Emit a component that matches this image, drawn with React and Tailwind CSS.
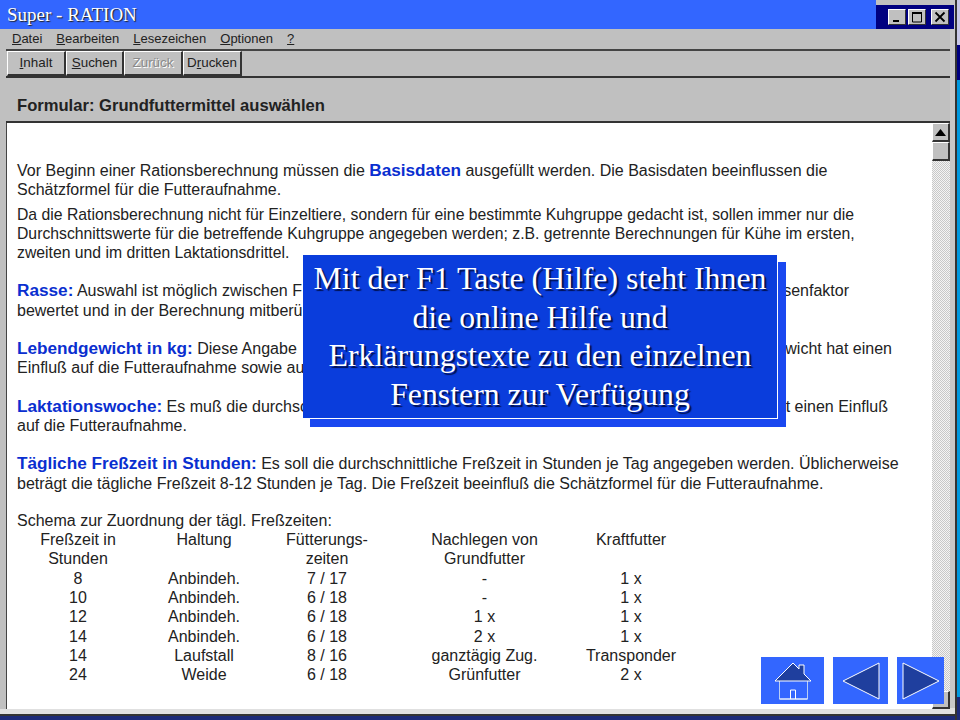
import React from 'react';

const rows = [
  ['8', 'Anbindeh.', '7 / 17', '-', '1 x'],
  ['10', 'Anbindeh.', '6 / 18', '-', '1 x'],
  ['12', 'Anbindeh.', '6 / 18', '1 x', '1 x'],
  ['14', 'Anbindeh.', '6 / 18', '2 x', '1 x'],
  ['14', 'Laufstall', '8 / 16', 'ganztägig Zug.', 'Transponder'],
  ['24', 'Weide', '6 / 18', 'Grünfutter', '2 x'],
];

const Key = ({ children }) => <span className="underline">{children}</span>;

function Line({ children, right, narrow }) {
  return (
    <div className={`flex justify-between whitespace-nowrap h-[19.3px] leading-[19.3px] ${narrow ? 'text-[15.75px]' : ''}`}>
      <span>{children}</span>
      {right && <span>{right}</span>}
    </div>
  );
}

const Term = ({ children }) => <span className="font-bold text-[#0a2fd0] text-[17.2px]">{children}</span>;

function ToolButton({ children, disabled }) {
  return (
    <div
      className={`flex items-center justify-center h-[25px] border-t border-l border-t-white border-l-white border-r-2 border-b-2 border-r-[#333] border-b-[#333] bg-[#c0c0c0] ${disabled ? 'text-[#8a8a8a] [text-shadow:1px_1px_0_#fff]' : ''}`}
    >
      {children}
    </div>
  );
}

function Row({ cells }) {
  return (
    <div className="grid grid-cols-[122px_130px_116px_199px_94px] text-center h-[19.3px] leading-[19.3px] whitespace-nowrap">
      {cells.map((c, i) => <span key={i}>{c}</span>)}
    </div>
  );
}

function WinButton({ children }) {
  return (
    <div className="w-[18px] h-[16px] bg-[#c0c0c0] border-t border-l border-white border-r border-b border-r-[#333] border-b-[#333] flex items-center justify-center">
      {children}
    </div>
  );
}

export default function App() {
  return (
    <div className="relative w-[960px] h-[720px] overflow-hidden bg-[#c0c0c0] text-[16px] text-[#222] font-['Liberation_Sans',Arial,sans-serif]">
      <div className="flex h-full">
        <div className="w-[950px] flex flex-col">
          {/* title bar */}
          <div className="flex h-[29px] shrink-0">
            <div className="w-[876px] bg-[#3366ff] text-white font-['Liberation_Serif',serif] text-[19px] leading-[29px] pl-[7px] [text-shadow:1px_1px_1px_#222]">
              Super - RATION
            </div>
            <div className="flex-1 flex flex-col">
              <div className="h-[5px] bg-[#c0c0c0]" />
              <div className="flex-1 bg-[#000080] flex justify-end items-center gap-[2px] pr-[1px]">
                <WinButton>
                  <svg width="12" height="12" viewBox="0 0 12 12"><rect x="2" y="9" width="6" height="2" fill="#000" /></svg>
                </WinButton>
                <WinButton>
                  <svg width="12" height="12" viewBox="0 0 12 12"><path d="M1.5 2h9v9h-9z" fill="none" stroke="#000" /><path d="M1 2h10" stroke="#000" strokeWidth="2" /></svg>
                </WinButton>
                <div className="w-px" />
                <WinButton>
                  <svg width="12" height="12" viewBox="0 0 12 12"><path d="M1.5 1.5l9 9M10.5 1.5l-9 9" stroke="#000" strokeWidth="1.8" /></svg>
                </WinButton>
              </div>
            </div>
          </div>

          <div className="flex-1 min-h-0 flex flex-col border-l-[6px] border-l-[#c0c0c0]">
            {/* menu */}
            <div className="flex gap-[14px] h-[20px] shrink-0 box-content items-center pl-[6px] text-[13px] border-b-2 border-b-[#444]">
              <span><Key>D</Key>atei</span>
              <span><Key>B</Key>earbeiten</span>
              <span><Key>L</Key>esezeichen</span>
              <span><Key>O</Key>ptionen</span>
              <span><Key>?</Key></span>
            </div>

            {/* buttons */}
            <div className="grid grid-cols-[59px_58px_59px_59px] h-[25px] shrink-0 pl-px text-[13.4px] border-b-2 border-b-[#333] box-content">
              <ToolButton><Key>I</Key>nhalt</ToolButton>
              <ToolButton><Key>S</Key>uchen</ToolButton>
              <ToolButton disabled>Zurück</ToolButton>
              <ToolButton>D<Key>r</Key>ucken</ToolButton>
            </div>

            {/* heading */}
            <div className="h-[45px] shrink-0 flex items-end pb-[2px] pl-[11px] font-bold text-[16.6px] border-b-2 border-b-[#333]">
              Formular: Grundfuttermittel auswählen
            </div>

            {/* text area */}
            <div className="flex-1 flex min-h-0">
              <div className="flex-1 bg-white pl-[10px] pt-[38px] overflow-hidden border-l border-l-[#444]">
                <Line>Vor Beginn einer Rationsberechnung müssen die <Term>Basisdaten</Term> ausgefüllt werden. Die Basisdaten beeinflussen die</Line>
                <Line>Schätzformel für die Futteraufnahme.</Line>
                <div className="h-[5px]" />
                <Line narrow>Da die Rationsberechnung nicht für Einzeltiere, sondern für eine bestimmte Kuhgruppe gedacht ist, sollen immer nur die</Line>
                <Line narrow>Durchschnittswerte für die betreffende Kuhgruppe angegeben werden; z.B.  getrennte Berechnungen für Kühe im ersten,</Line>
                <Line narrow>zweiten und im dritten Laktationsdrittel.</Line>
                <div className="h-[19px]" />
                <div className="w-[832px]"><Line right="senfaktor"><Term>Rasse:</Term> Auswahl ist möglich zwischen F</Line></div>
                <Line>bewertet und in der Berechnung mitberü</Line>
                <div className="h-[19px]" />
                <div className="w-[875px]"><Line right="gewicht hat einen"><Term>Lebendgewicht in kg:</Term> Diese Angabe</Line></div>
                <Line>Einfluß auf die Futteraufnahme sowie auf</Line>
                <div className="h-[19px]" />
                <div className="w-[871px]"><Line right="at einen Einfluß"><Term>Laktationswoche:</Term> Es muß die durchsc</Line></div>
                <Line>auf die Futteraufnahme.</Line>
                <div className="h-[19px]" />
                <Line><Term>Tägliche Freßzeit in Stunden:</Term> Es soll die durchschnittliche Freßzeit in Stunden je Tag angegeben werden. Üblicherweise</Line>
                <Line>beträgt die tägliche Freßzeit 8-12 Stunden je Tag. Die Freßzeit beeinfluß die Schätzformel für die Futteraufnahme.</Line>
                <div className="h-[18px]" />
                <Line>Schema zur Zuordnung der tägl. Freßzeiten:</Line>
                <Row cells={['Freßzeit in', 'Haltung', 'Fütterungs-', 'Nachlegen von', 'Kraftfutter']} />
                <Row cells={['Stunden', '', 'zeiten', 'Grundfutter', '']} />
                {rows.map((r, i) => <Row key={i} cells={r} />)}
              </div>

              {/* scrollbar */}
              <div className="w-[18px] flex flex-col bg-[repeating-conic-gradient(#c8c8c8_0_25%,#f4f4f4_0_50%)] bg-[length:2px_2px]">
                <div className="h-[19px] bg-[#c0c0c0] flex items-center justify-center border-t border-l border-white border-b-2 border-r-2 border-b-[#333] border-r-[#333]">
                  <svg width="11" height="7" viewBox="0 0 11 7"><path d="M5.5 0L11 7H0z" fill="#000" /></svg>
                </div>
                <div className="h-[19px] bg-[#c0c0c0] border-t border-l border-white border-b-2 border-r-2 border-b-[#333] border-r-[#333]" />
                <div className="mt-auto h-[18px] bg-[#c0c0c0] border-t border-l border-white border-b-2 border-r-2 border-b-[#333] border-r-[#333]" />
              </div>
            </div>
          </div>

          {/* bottom frame */}
          <div className="h-[5px] shrink-0 bg-[#e0e0e0]" />
          <div className="h-[2px] shrink-0 bg-[#333]" />
          <div className="h-[4px] shrink-0 bg-[#1c2a78]" />
        </div>

        {/* right frame */}
        <div className="flex-1 flex">
          <div className="w-[7px] flex flex-col border-r-2 border-r-[#333] bg-[#c8c8c8]">
            <div className="h-[5px] shrink-0" />
            <div className="h-[24px] shrink-0 w-[4px] bg-[#000080]" />
            <div className="flex-1" />
            <div className="h-[6px] shrink-0 bg-[#e0e0e0]" />
            <div className="h-[2px] shrink-0 bg-[#333]" />
            <div className="h-[4px] shrink-0 bg-[#1c2a78]" />
          </div>
          <div className="flex-1 flex flex-col">
            <div className="h-[45px] bg-[#c8c8e8]" />
            <div className="h-[35px] bg-[#000080]" />
            <div className="flex-1 bg-[#0099e0]" />
            <div className="h-[23px] bg-[#1c2a78]" />
          </div>
        </div>
      </div>

      {/* popup shadow and popup */}
      <div className="absolute left-[310px] top-[262px] w-[476px] h-[165px] bg-[#1a48f0]" />
      <div className="absolute left-[303px] top-[255px] w-[475px] h-[164px] pt-[1px] bg-[#0a3ddc] border-b border-r border-white flex flex-col justify-center text-center text-white font-['Liberation_Serif',serif] text-[31.8px] leading-[38.5px] [text-shadow:2px_2px_1px_#001050]">
        <div>Mit der F1 Taste (Hilfe) steht Ihnen</div>
        <div>die online Hilfe und</div>
        <div>Erklärungstexte zu den einzelnen</div>
        <div>Fenstern zur Verfügung</div>
      </div>

      {/* nav buttons */}
      <div className="absolute left-[761px] top-[657px] flex gap-[9px]">
        <div className="w-[63px] h-[47px] bg-[#3366ff] flex items-center justify-center">
          <svg width="38" height="38" viewBox="0 0 38 38">
            <path d="M5.5 19v18h28V19" fill="none" stroke="#b7cdf5" />
            <path d="M5.5 37h28" stroke="#fff" />
            <path d="M16.5 37V28h5v9" fill="none" stroke="#fff" />
            <path d="M1 19L19 1l6 6V3h5v9l7 7z" fill="#1f3f9e" stroke="#fff" />
          </svg>
        </div>
        <div className="w-[55px] h-[47px] bg-[#3366ff] flex items-center justify-center">
          <svg width="38" height="38" viewBox="0 0 38 38"><path d="M37 1v36L1 19z" fill="#1f3f9e" stroke="#fff" /></svg>
        </div>
        <div className="w-[47px] h-[47px] bg-[#3366ff] flex items-center justify-center">
          <svg width="38" height="38" viewBox="0 0 38 38"><path d="M1 1v36l36-18z" fill="#1f3f9e" stroke="#fff" /></svg>
        </div>
      </div>
    </div>
  );
}
